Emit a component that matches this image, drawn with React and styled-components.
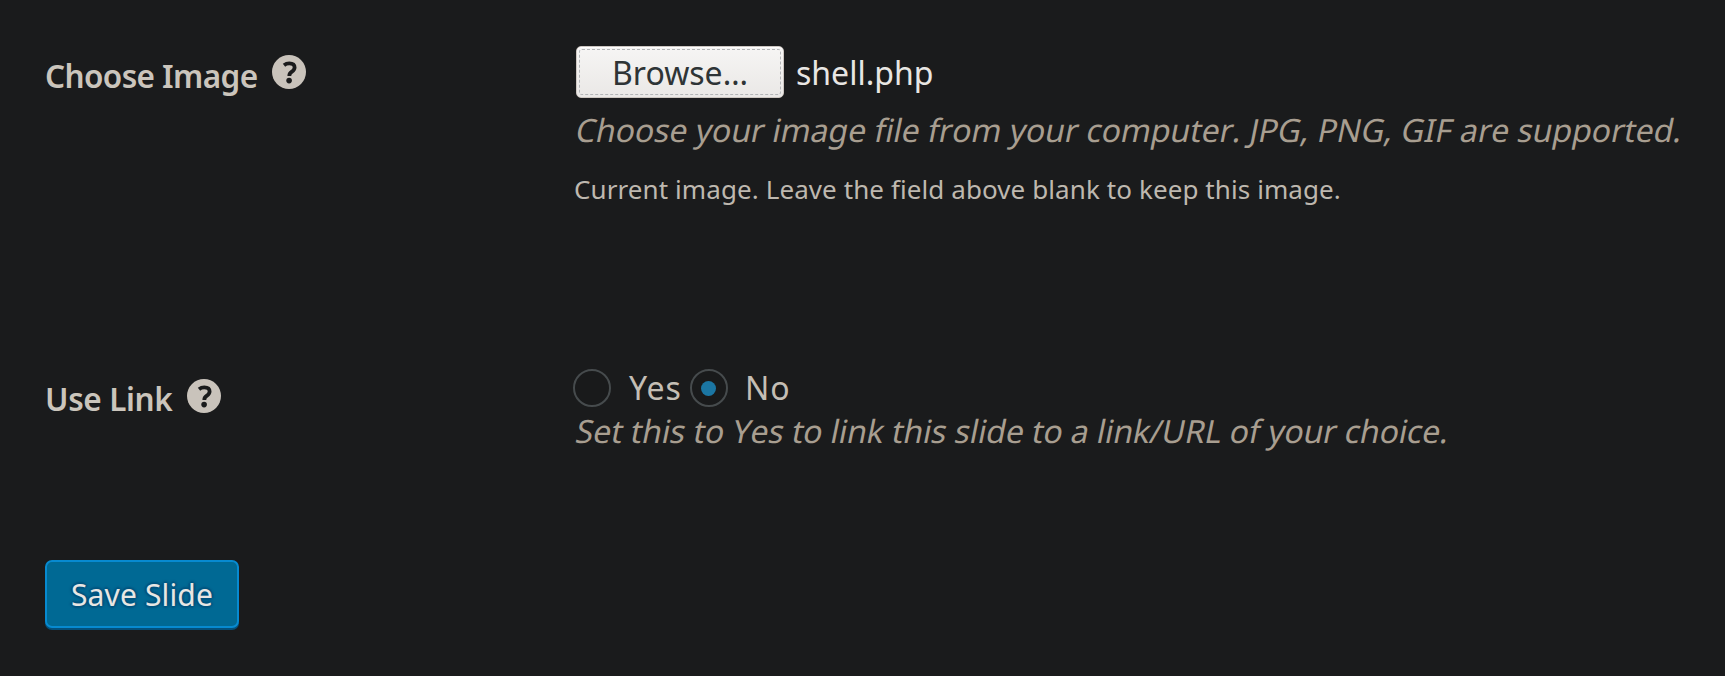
import React from 'react';
import styled, { createGlobalStyle } from 'styled-components';

const Global = createGlobalStyle`
  *, *::before, *::after { box-sizing: border-box; }
  body {
    margin: 0;
    background: #1a1b1c;
    color: #c4beb5;
    font-family: "Noto Sans", "Open Sans", sans-serif;
  }
`;

const Page = styled.form`
  min-height: 676px;
  padding: 46px 0 0 45px;
  background: #1a1b1c;
`;

const Field = styled.section`
  display: grid;
  grid-template-columns: 529px 1fr;
  height: ${(p) => p.$height}px;
`;

const FieldHeading = styled.div`
  display: flex;
  align-items: flex-start;
  gap: 15px;
  padding-top: 10px;
`;

const FieldLabel = styled.span`
  font-size: 31.5px;
  font-weight: 600;
  line-height: 39px;
  letter-spacing: ${(p) => p.$tracking}px;
  color: #cbc5bc;
  white-space: nowrap;
`;

const HelpIcon = styled.svg`
  width: 34px;
  height: 34px;
  margin-top: ${(p) => p.$drop}px;
  flex: none;
`;

const Controls = styled.div`
  white-space: nowrap;
`;

const FileRow = styled.div`
  display: flex;
  align-items: center;
  gap: 12px;
  height: 52px;
  padding-left: 2px;
  font-size: 32px;
`;

const BrowseButton = styled.button`
  display: flex;
  width: 208px;
  height: 52px;
  padding: 2px;
  border: 1px solid #cdc7c2;
  border-radius: 5px;
  background: linear-gradient(#f6f5f4, #eae8e6);
  box-shadow: inset 0 1px #fff;
  color: #2e3436;
  font: inherit;
`;

const FocusRing = styled.span`
  display: flex;
  flex: 1;
  align-self: stretch;
  align-items: center;
  justify-content: center;
  border: 1px dashed #b3b5b7;
  border-radius: 3px;
`;

const FileName = styled.span`
  color: #e8e6e3;
`;

const Description = styled.p`
  width: max-content;
  margin: ${(p) => p.$top}px 0 0;
  font-size: 32px;
  font-kerning: none;
  line-height: 40px;
  letter-spacing: ${(p) => p.$tracking || 0}px;
  color: #a89e90;
  transform: skewX(-11.5deg);
  transform-origin: 0 32px;
`;

const Note = styled.p`
  margin: 21px 0 0;
  font-size: 26px;
  line-height: 36px;
  letter-spacing: 0.09px;
  color: #beb8af;
`;

const RadioGroup = styled.div`
  display: flex;
  gap: 8px;
  height: 38px;
  margin-left: -1px;
`;

const Option = styled.label`
  display: flex;
  align-items: center;
  gap: ${(p) => p.$gap}px;
  font-size: 32px;
  line-height: 38px;
  letter-spacing: 1px;
`;

const Radio = styled.input`
  appearance: none;
  display: grid;
  place-items: center;
  width: 38px;
  height: 38px;
  margin: 0;
  border: 2px solid #464b4d;
  border-radius: 50%;
  background: #191a1b;

  &:checked::before {
    content: "";
    width: 15px;
    height: 15px;
    border-radius: 50%;
    background: #1b76a3;
  }
`;

const SaveButton = styled.button`
  display: block;
  width: 194px;
  height: 68px;
  padding: 0;
  border: 2px solid #078ad0;
  border-radius: 7px;
  background: #006994;
  box-shadow: 0 2px #04507a;
  color: #e8e6e3;
  font: 400 30px "Noto Sans", sans-serif;
  letter-spacing: 0.15px;
  text-shadow: 0 -2px 2px #00527d, 2px 0 2px #00527d, 0 2px 2px #00527d, -2px 0 2px #00527d;
`;

function Help({ drop }) {
  return (
    <HelpIcon $drop={drop} viewBox="0 0 34 34" aria-hidden="true">
      <circle cx="17" cy="17" r="17" fill="#c9c3bb" />
      <path
        d="M12 10.2C13.5 9 15.5 8.4 17.3 8.4c3.3 0 5.3 1.6 5.3 4.1 0 1.9-1 3-2.7 4.2-1.8 1.2-2.6 1.9-2.6 4.2"
        fill="none"
        stroke="#1a1b1c"
        strokeWidth="3.8"
      />
      <circle cx="17.1" cy="25.6" r="2.8" fill="#1a1b1c" />
    </HelpIcon>
  );
}

export default function App() {
  return (
    <>
      <Global />
      <Page onSubmit={(e) => e.preventDefault()}>
        <Field $height={323}>
          <FieldHeading>
            <FieldLabel $tracking={-0.6}>Choose Image</FieldLabel>
            <Help drop={-1} />
          </FieldHeading>
          <Controls>
            <FileRow>
              <BrowseButton type="button">
                <FocusRing>Browse…</FocusRing>
              </BrowseButton>
              <FileName>shell.php</FileName>
            </FileRow>
            <Description $top={12} $tracking={-0.05}>
              Choose your image file from your computer. JPG, PNG, GIF are supported.
            </Description>
            <Note>Current image. Leave the field above blank to keep this image.</Note>
          </Controls>
        </Field>
        <Field $height={191}>
          <FieldHeading>
            <FieldLabel $tracking={-0.37}>Use Link</FieldLabel>
            <Help drop={0} />
          </FieldHeading>
          <Controls>
            <RadioGroup>
              <Option $gap={18}>
                <Radio type="radio" name="link" value="yes" />
                Yes
              </Option>
              <Option $gap={17}>
                <Radio type="radio" name="link" value="no" defaultChecked />
                No
              </Option>
            </RadioGroup>
            <Description $top={4} $tracking={-0.1}>
              Set this to Yes to link this slide to a link/URL of your choice.
            </Description>
          </Controls>
        </Field>
        <SaveButton type="submit">Save Slide</SaveButton>
      </Page>
    </>
  );
}
